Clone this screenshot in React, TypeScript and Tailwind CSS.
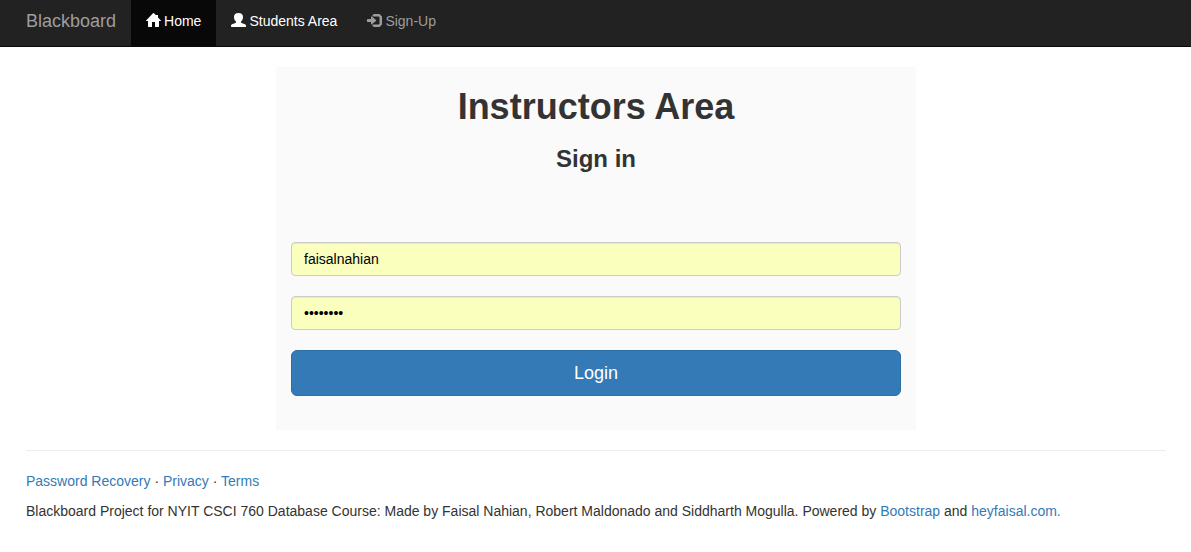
import React from 'react';

function HomeIcon() {
  return (
    <svg aria-hidden="true" viewBox="0 0 15 14" className="h-3.5 w-[15px] shrink-0 fill-current">
      <path d="M7 .3a.7.7 0 0 1 1 0L10 2.300V2h2v2.400l2.900 3c.3.300.2.600-.2.600H13v5.300c0 .400-.3.700-.7.700H9V9H6v5H2.700a.7.700 0 0 1-.7-.7V8H.3C0 8-.1 7.700.1 7.400Z" />
    </svg>
  );
}

function UserIcon() {
  return (
    <svg aria-hidden="true" viewBox="0 0 15 14" className="h-3.5 w-[15px] shrink-0 fill-current">
      <path d="M7.500 0C10.400 0 12 1.500 12 3.900c0 2-.8 3.600-2 4.600v.7c0 .400.2.600.6.800l3.300 1.300c.7.300 1.100.8 1.100 1.400v.8c0 .300-.2.500-.5.500H.5c-.3 0-.5-.2-.5-.5v-.8c0-.6.400-1.100 1.100-1.400L4.400 10c.4-.2.600-.4.600-.8v-.7C3.800 7.500 3 5.900 3 3.900 3 1.500 4.600 0 7.500 0Z" />
    </svg>
  );
}

function SignUpIcon() {
  return (
    <svg aria-hidden="true" viewBox="0 0 15 14" className="h-3.5 w-[15px] shrink-0 fill-current">
      <path d="M7 1h5.500L15 3.500v8L12.500 14H7l-1.500-1v-1.500h6.200l.8-.8V4.300l-.8-.8H5.500V2Z" />
      <path d="M4 4c0-.5.400-.7.800-.4l4.200 3.400c.3.300.3.600 0 .900l-4.200 3.400c-.4.300-.8.100-.8-.4V9H.6C.2 9 0 8.800 0 8.400V6.600C0 6.200.2 6 .6 6H4Z" />
    </svg>
  );
}

const container = 'mx-auto max-w-[1169px] pr-[14px] pl-[15px]';
const navItem = 'flex gap-[3px] px-[15px] pt-[11px] pb-[15px]';
const link = 'text-[#337ab7] hover:underline';
const field =
  'block h-[34px] w-full rounded border border-[#ccc] bg-[#faffbd] px-3 text-sm text-black shadow-[inset_0_1px_1px_rgba(0,0,0,0.075)] outline-none focus:border-[#66afe9]';

export default function App() {
  return (
    <div className="font-['Liberation_Sans',Arial,sans-serif] text-sm leading-5 text-[#333]">
      <header className="border-b border-[#080808] bg-[#222]">
        <nav className={`${container} flex flex-wrap`}>
          <a href="#" className="pt-[11px] pr-[15px] text-lg leading-5 text-[#9d9d9d]">
            Blackboard
          </a>
          <a href="#home" aria-current="page" className={`${navItem} bg-[#080808] text-white`}>
            <span className="pt-[2px]"><HomeIcon /></span>
            Home
          </a>
          <a href="#students" className={`${navItem} text-white`}>
            <span className="pt-[2px]"><UserIcon /></span>
            Students Area
          </a>
          <a href="#signup" className={`${navItem} text-[#9d9d9d]`}>
            <span className="pt-[2px]"><SignUpIcon /></span>
            Sign-Up
          </a>
        </nav>
      </header>

      <div className={`${container} pt-5`}>
        <main className="mx-auto max-w-[640px] bg-[#fafafa] px-[15px] pt-5 pb-[34px]">
          <h1 className="text-center text-4xl leading-10 font-bold">Instructors Area</h1>
          <h2 className="mt-[18px] text-center text-2xl leading-7 font-bold">Sign in</h2>
          <form className="mt-[69px] flex flex-col gap-5" onSubmit={(e) => e.preventDefault()}>
            <input type="text" aria-label="Username" defaultValue="faisalnahian" autoComplete="username" className={field} />
            <input type="password" aria-label="Password" defaultValue="password" autoComplete="current-password" className={field} />
            <button type="submit" className="h-[46px] w-full rounded-md border border-[#2e6da4] bg-[#337ab7] text-lg text-white">
              Login
            </button>
          </form>
        </main>

        <footer className="mt-5 border-t border-[#eee] pt-5">
          <p className="mb-2.5">
            <a href="#recovery" className={link}>Password Recovery</a> · <a href="#privacy" className={link}>Privacy</a> ·{' '}
            <a href="#terms" className={link}>Terms</a>
          </p>
          <p>
            Blackboard Project for NYIT CSCI 760 Database Course: Made by Faisal Nahian, Robert Maldonado and Siddharth Mogulla.
            Powered by <a href="#bootstrap" className={link}>Bootstrap</a> and{' '}
            <a href="#heyfaisal" className={link}>heyfaisal.com.</a>
          </p>
        </footer>
      </div>
    </div>
  );
}
